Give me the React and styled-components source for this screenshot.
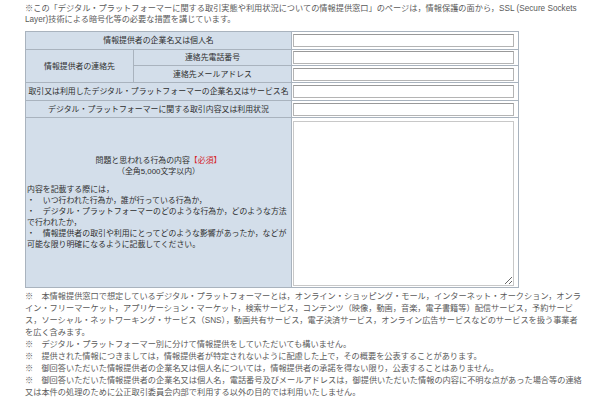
import React from 'react';
import styled, { createGlobalStyle } from 'styled-components';

const GlobalStyle = createGlobalStyle`
  body {
    margin: 0;
    background: #fff;
    font-family: "Liberation Sans", "Noto Sans CJK JP", sans-serif;
  }
`;

const Page = styled.div`
  width: 561px;
  padding: 3px 0 0 25px;
  color: #5a5a5a;
`;

const Note = styled.p`
  margin: 0 0 6px;
  font-size: 8.2px;
  line-height: 11px;
`;

const FormTable = styled.table`
  width: 493px;
  border-collapse: collapse;
  table-layout: fixed;
  font-size: 7.9px;
  line-height: 11px;
  color: #2e2e2e;
  border: 1px solid #a9b3be;
`;

const Row = styled.tr`
  height: ${(p) => p.$h || 17}px;
`;

const LabelCell = styled.th`
  background: #d3deea;
  border: 1px solid #a9b3be;
  font-weight: normal;
  text-align: center;
  vertical-align: middle;
  padding: 0 1px;
  white-space: nowrap;
`;

const FieldCell = styled.td`
  background: #fff;
  border: 1px solid #a9b3be;
  padding: 0 3px 0 1px;
  vertical-align: middle;
`;

const TextInput = styled.input`
  display: block;
  box-sizing: border-box;
  width: 221px;
  height: 13px;
  margin: 0;
  padding: 0 2px;
  border: 1px solid #b4b4b4;
  border-top-color: #999;
  background: #fff;
  font-size: 8px;
`;

const TextArea = styled.textarea`
  display: block;
  box-sizing: border-box;
  width: 221px;
  height: 165px;
  margin: 2px 0 0;
  padding: 2px;
  border: 1px solid #c8c8c8;
  background: #fff;
  font-size: 8px;
`;

const BigLabel = styled(LabelCell)`
  white-space: normal;
`;

const Heading = styled.div`
  text-align: center;
`;

const Required = styled.span`
  color: #d6262b;
`;

const Guide = styled.div`
  margin-top: 7px;
  text-align: left;
`;

const NoteList = styled.ul`
  list-style: none;
  width: 558.5px;
  margin: 3px 0 0;
  padding: 0;
  font-size: 8.2px;
  line-height: 12px;
`;

export default function App() {
  return (
    <>
      <GlobalStyle />
      <Page>
        <Note>
          ※この「デジタル・プラットフォーマーに関する取引実態や利用状況についての情報提供窓口」のページは，情報保護の面から，SSL (Secure Sockets Layer)技術による暗号化等の必要な措置を講じています。
        </Note>
        <FormTable>
          <colgroup>
            <col style={{ width: 108 }} />
            <col style={{ width: 158 }} />
            <col style={{ width: 227 }} />
          </colgroup>
          <tbody>
            <Row $h={18}>
              <LabelCell colSpan={2}>情報提供者の企業名又は個人名</LabelCell>
              <FieldCell><TextInput /></FieldCell>
            </Row>
            <Row $h={16}>
              <LabelCell rowSpan={2}>情報提供者の連絡先</LabelCell>
              <LabelCell>連絡先電話番号</LabelCell>
              <FieldCell><TextInput /></FieldCell>
            </Row>
            <Row>
              <LabelCell>連絡先メールアドレス</LabelCell>
              <FieldCell><TextInput /></FieldCell>
            </Row>
            <Row $h={18}>
              <LabelCell colSpan={2}>取引又は利用したデジタル・プラットフォーマーの企業名又はサービス名</LabelCell>
              <FieldCell><TextInput /></FieldCell>
            </Row>
            <Row>
              <LabelCell colSpan={2}>デジタル・プラットフォーマーに関する取引内容又は利用状況</LabelCell>
              <FieldCell><TextInput /></FieldCell>
            </Row>
            <Row $h={170}>
              <BigLabel colSpan={2}>
                <Heading>
                  問題と思われる行為の内容<Required>【必須】</Required>
                  <br />
                  （全角5,000文字以内）
                </Heading>
                <Guide>
                  内容を記載する際には，
                  <br />
                  ・　いつ行われた行為か，誰が行っている行為か，
                  <br />
                  ・　デジタル・プラットフォーマーのどのような行為か，どのような方法で行われたか，
                  <br />
                  ・　情報提供者の取引や利用にとってどのような影響があったか，などが可能な限り明確になるように記載してください。
                </Guide>
              </BigLabel>
              <FieldCell><TextArea /></FieldCell>
            </Row>
          </tbody>
        </FormTable>
        <NoteList>
          <li>※　本情報提供窓口で想定しているデジタル・プラットフォーマーとは，オンライン・ショッピング・モール，インターネット・オークション，オンライン・フリーマーケット，アプリケーション・マーケット，検索サービス，コンテンツ（映像，動画，音楽，電子書籍等）配信サービス，予約サービス，ソーシャル・ネットワーキング・サービス（SNS），動画共有サービス，電子決済サービス，オンライン広告サービスなどのサービスを扱う事業者を広く含みます。</li>
          <li>※　デジタル・プラットフォーマー別に分けて情報提供をしていただいても構いません。</li>
          <li>※　提供された情報につきましては，情報提供者が特定されないように配慮した上で，その概要を公表することがあります。</li>
          <li>※　御回答いただいた情報提供者の企業名又は個人名については，情報提供者の承諾を得ない限り，公表することはありません。</li>
          <li>※　御回答いただいた情報提供者の企業名又は個人名，電話番号及びメールアドレスは，御提供いただいた情報の内容に不明な点があった場合等の連絡又は本件の処理のために公正取引委員会内部で利用する以外の目的では利用いたしません。</li>
        </NoteList>
      </Page>
    </>
  );
}
